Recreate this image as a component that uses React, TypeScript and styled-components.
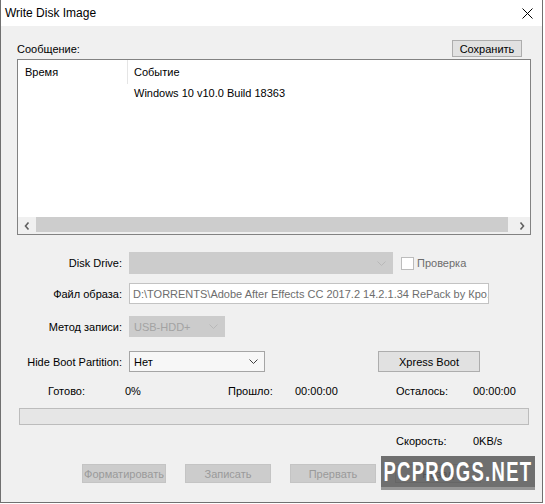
import React from 'react';
import styled, { createGlobalStyle } from 'styled-components';

const GlobalStyle = createGlobalStyle`
  html, body {
    margin: 0;
    padding: 0;
    background: #fff;
  }
  body {
    font-family: "Liberation Sans", Arial, sans-serif;
    font-size: 11px;
    color: #000;
  }
`;

const Window = styled.div`
  position: relative;
  width: 543px;
  height: 503px;
  box-sizing: border-box;
  border: 1px solid #707070;
  border-top: none;
  background: #f0f0f0;
  display: flex;
  flex-direction: column;
`;

const TitleBar = styled.div`
  height: 26px;
  flex-shrink: 0;
  background: #fff;
  display: flex;
  align-items: center;
  justify-content: space-between;
  padding: 0 9px 0 4px;
  font-size: 12px;
`;

const Body = styled.div`
  display: flex;
  flex-direction: column;
  padding: 0 11px 0 16px;
`;

const MessageHeader = styled.div`
  margin-top: 14px;
  display: flex;
  align-items: center;
  justify-content: space-between;
  padding-right: 9px;
`;

const Button = styled.button<{ $width: number; $disabled?: boolean }>`
  width: ${p => p.$width}px;
  height: 19px;
  padding: 0;
  box-sizing: border-box;
  font-family: inherit;
  font-size: 11px;
  background: ${p => (p.$disabled ? '#cccccc' : '#e1e1e1')};
  border: 1px solid ${p => (p.$disabled ? '#c4c4c4' : '#adadad')};
  color: ${p => (p.$disabled ? '#9a9a9a' : '#000')};
`;

const SaveButton = styled(Button)`
  height: 17px;
`;

const LogList = styled.div`
  margin-top: 2px;
  height: 176px;
  box-sizing: border-box;
  border: 1px solid #828282;
  background: #fff;
  display: flex;
  flex-direction: column;
`;

const ListRow = styled.div<{ $height: number }>`
  display: grid;
  grid-template-columns: 110px 1fr;
  height: ${p => p.$height}px;
  align-items: center;
`;

const ListCell = styled.div<{ $divider?: boolean }>`
  height: 100%;
  display: flex;
  align-items: center;
  padding-left: ${p => (p.$divider ? 7 : 6)}px;
  border-right: ${p => (p.$divider ? '1px solid #e5e5e5' : 'none')};
  white-space: nowrap;
`;

const ListFill = styled.div`
  flex: 1;
`;

const HScroll = styled.div`
  height: 17px;
  display: flex;
  background: #f0f0f0;
`;

const ScrollArrow = styled.div`
  width: 17px;
  display: flex;
  align-items: center;
  justify-content: center;
`;

const ScrollThumb = styled.div`
  flex: 1;
  margin: 0 5px 2px 1px;
  background: #cdcdcd;
`;

const FormRow = styled.div<{ $top: number; $height: number }>`
  margin-top: ${p => p.$top}px;
  height: ${p => p.$height}px;
  display: flex;
  align-items: center;
`;

const FieldLabel = styled.div`
  width: 105px;
  margin-right: 7px;
  text-align: right;
  white-space: nowrap;
`;

const Combo = styled.div<{ $width: number; $disabled?: boolean }>`
  width: ${p => p.$width}px;
  height: 100%;
  box-sizing: border-box;
  display: flex;
  align-items: center;
  justify-content: space-between;
  padding: 0 6px 0 4px;
  background: ${p => (p.$disabled ? '#cccccc' : '#f7f7f7')};
  border: 1px solid ${p => (p.$disabled ? '#cccccc' : '#a5a5a5')};
  color: ${p => (p.$disabled ? '#a3a3a3' : '#000')};
`;

const PathInput = styled.div`
  width: 360px;
  height: 100%;
  box-sizing: border-box;
  display: flex;
  align-items: center;
  padding: 0 3px;
  background: #fff;
  border: 1px solid #c3c3c3;
  color: #6d6d6d;
  white-space: nowrap;
  overflow: hidden;
`;

const CheckBox = styled.div`
  width: 13px;
  height: 13px;
  box-sizing: border-box;
  margin-left: 8px;
  background: #fff;
  border: 1px solid #bcbcbc;
`;

const CheckLabel = styled.span`
  margin-left: 3px;
  color: #6d6d6d;
`;

const XpressButton = styled(Button)`
  height: 21px;
  margin-left: 113px;
`;

const StatsRow = styled.div<{ $top: number }>`
  margin-top: ${p => p.$top}px;
  height: 14px;
  display: grid;
  grid-template-columns: 77px 103px 67px 101px 77px auto;
  align-items: center;
  padding-left: 31px;
  white-space: nowrap;
`;

const StatCell = styled.div<{ $col?: number }>`
  grid-column: ${p => (p.$col ? p.$col : 'auto')};
`;

const ProgressBar = styled.div`
  margin: 10px 2px 0;
  height: 17px;
  box-sizing: border-box;
  background: #e6e6e6;
  border: 1px solid #bcbcbc;
`;

const ActionRow = styled.div`
  margin-top: 16px;
  padding-left: 65px;
  display: flex;
  gap: 19px;
`;

const Watermark = styled.div`
  position: absolute;
  left: 380px;
  top: 456px;
  width: 154px;
  height: 31px;
  background: rgba(92, 92, 92, 0.88);
  border-bottom: 3px solid rgba(160, 160, 160, 0.8);
  display: flex;
  align-items: center;
  justify-content: center;
  overflow: hidden;
`;

const WatermarkText = styled.span`
  display: inline-block;
  font-family: "Liberation Sans", Arial, sans-serif;
  font-weight: bold;
  font-size: 28px;
  letter-spacing: 2px;
  color: #fff;
  transform: scaleX(0.66);
  white-space: nowrap;
`;

const Chevron: React.FC<{ color: string }> = ({ color }) => (
  <svg width="9" height="5" viewBox="0 0 9 5">
    <path d="M0.5 0.5 L4.5 4.5 L8.5 0.5" fill="none" stroke={color} strokeWidth="1" />
  </svg>
);

const CloseIcon = () => (
  <svg width="11" height="11" viewBox="0 0 11 11">
    <path d="M0.5 0.5 L10.5 10.5 M10.5 0.5 L0.5 10.5" stroke="#000" strokeWidth="1" />
  </svg>
);

const ArrowGlyph: React.FC<{ dir: 'left' | 'right' }> = ({ dir }) => (
  <svg width="6" height="8" viewBox="0 0 6 8">
    <path
      d={dir === 'left' ? 'M4.5 0.5 L1.5 4 L4.5 7.5' : 'M1.5 0.5 L4.5 4 L1.5 7.5'}
      fill="none"
      stroke="#606060"
      strokeWidth="1.6"
    />
  </svg>
);

const App: React.FC = () => {
  return (
    <>
      <GlobalStyle />
      <Window>
        <TitleBar>
          <span>Write Disk Image</span>
          <CloseIcon />
        </TitleBar>
        <Body>
          <MessageHeader>
            <span>Сообщение:</span>
            <SaveButton $width={70}>Сохранить</SaveButton>
          </MessageHeader>
          <LogList>
            <ListRow $height={24}>
              <ListCell $divider>Время</ListCell>
              <ListCell>Событие</ListCell>
            </ListRow>
            <ListRow $height={18}>
              <ListCell />
              <ListCell>Windows 10 v10.0 Build 18363</ListCell>
            </ListRow>
            <ListFill />
            <HScroll>
              <ScrollArrow><ArrowGlyph dir="left" /></ScrollArrow>
              <ScrollThumb />
              <ScrollArrow><ArrowGlyph dir="right" /></ScrollArrow>
            </HScroll>
          </LogList>

          <FormRow $top={17} $height={22}>
            <FieldLabel>Disk Drive:</FieldLabel>
            <Combo $width={264} $disabled>
              <span />
              <Chevron color="#b8b8b8" />
            </Combo>
            <CheckBox />
            <CheckLabel>Проверка</CheckLabel>
          </FormRow>
          <FormRow $top={9} $height={21}>
            <FieldLabel>Файл образа:</FieldLabel>
            <PathInput>D:\TORRENTS\Adobe After Effects CC 2017.2 14.2.1.34 RePack by Кро.</PathInput>
          </FormRow>
          <FormRow $top={12} $height={21}>
            <FieldLabel>Метод записи:</FieldLabel>
            <Combo $width={96} $disabled>
              <span>USB-HDD+</span>
              <Chevron color="#b8b8b8" />
            </Combo>
          </FormRow>
          <FormRow $top={14} $height={21}>
            <FieldLabel>Hide Boot Partition:</FieldLabel>
            <Combo $width={136}>
              <span>Нет</span>
              <Chevron color="#404040" />
            </Combo>
            <XpressButton $width={102}>Xpress Boot</XpressButton>
          </FormRow>

          <StatsRow $top={12}>
            <StatCell>Готово:</StatCell>
            <StatCell>0%</StatCell>
            <StatCell>Прошло:</StatCell>
            <StatCell>00:00:00</StatCell>
            <StatCell>Осталось:</StatCell>
            <StatCell>00:00:00</StatCell>
          </StatsRow>
          <ProgressBar />
          <StatsRow $top={9}>
            <StatCell $col={5}>Скорость:</StatCell>
            <StatCell $col={6}>0KB/s</StatCell>
          </StatsRow>

          <ActionRow>
            <Button $width={84} $disabled>Форматировать</Button>
            <Button $width={86} $disabled>Записать</Button>
            <Button $width={86} $disabled>Прервать</Button>
            <Button $width={86}>Назад</Button>
          </ActionRow>
        </Body>
        <Watermark>
          <WatermarkText>PCPROGS.NET</WatermarkText>
        </Watermark>
      </Window>
    </>
  );
};

export default App;
